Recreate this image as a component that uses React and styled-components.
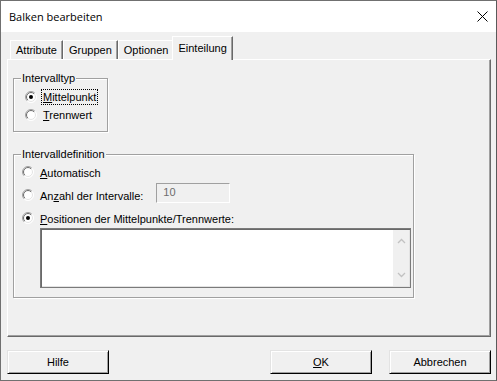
import React from 'react';
import styled, { createGlobalStyle } from 'styled-components';

const Global = createGlobalStyle`
  html, body { margin: 0; padding: 0; background: #f0f0f0; }
  body {
    font-family: "Liberation Sans", Arial, sans-serif;
    font-size: 11px;
    color: #000;
  }
  * { box-sizing: border-box; }
`;

const Window = styled.div`
  width: 497px;
  height: 381px;
  border: 1px solid #707070;
  border-right-color: #5a5a5a;
  display: flex;
  flex-direction: column;
  background: #f0f0f0;
  overflow: hidden;
`;

const TitleBar = styled.div`
  height: 31px;
  flex: none;
  background: #fff;
  display: flex;
  align-items: center;
  justify-content: space-between;
  padding-left: 8px;
`;

const Title = styled.span`
  font-family: "Open Sans", "Liberation Sans", sans-serif;
  font-size: 11px;
  color: #000;
`;

const CloseButton = styled.div`
  width: 28px;
  height: 31px;
  display: flex;
  align-items: center;
  justify-content: center;
`;

const Body = styled.div`
  flex: 1;
  display: flex;
  flex-direction: column;
  padding: 4px 5px 0 6px;
`;

const TabStrip = styled.div`
  display: flex;
  align-items: flex-end;
  height: 23px;
  padding-left: 3px;
  position: relative;
  z-index: 2;
`;

const Tab = styled.div`
  height: ${p => (p.$active ? 24 : 19)}px;
  margin: 0 ${p => (p.$active ? -2 : 0)}px ${p => (p.$active ? -1 : 0)}px;
  padding: 0 5px;
  border: 1px solid;
  border-bottom: none;
  border-color: #fff #696969 transparent #fff;
  box-shadow: inset -1px 0 #a0a0a0;
  background: #f0f0f0;
  position: relative;
  z-index: ${p => (p.$active ? 2 : 1)};
  display: flex;
  align-items: center;
  white-space: nowrap;
  line-height: 13px;
`;

const Panel = styled.div`
  height: 278px;
  border: 1px solid;
  border-color: #fff #696969 #696969 #fff;
  box-shadow: inset -1px -1px #a0a0a0;
  padding: 11px 0 0 5px;
  display: flex;
  flex-direction: column;
  align-items: flex-start;
  gap: 15px;
`;

const Group = styled.fieldset`
  margin: 0;
  padding: 0;
  width: ${p => p.$width}px;
  border: 1px solid #a0a0a0;
  box-shadow: inset 1px 1px #fff, 1px 1px #fff;
  min-inline-size: 0;
`;

const Legend = styled.legend`
  padding: 0 1px;
  margin-left: 7px;
  line-height: 14px;
  background: #f0f0f0;
`;

const GroupBody = styled.div`
  display: flex;
  flex-direction: column;
  padding: ${p => p.$pad};
`;

const Row = styled.div`
  display: flex;
  align-items: center;
  height: ${p => p.$h}px;
  margin-top: ${p => p.$mt || 0}px;
`;

const RadioBox = styled.span`
  width: 12px;
  height: 12px;
  flex: none;
  display: block;
  margin-top: ${p => p.$mt || 0}px;
`;

const Label = styled.span`
  margin-left: 4px;
  padding: 0 1px;
  border: 1px dotted ${p => (p.$focus ? '#000' : 'transparent')};
  line-height: 14px;
  white-space: nowrap;
`;

const DisabledInput = styled.div`
  width: 74px;
  height: 20px;
  margin-left: 11px;
  margin-bottom: 6px;
  border: 1px solid;
  border-color: #a0a0a0 #fff #fff #a0a0a0;
  background: #f0f0f0;
  color: #6d6d6d;
  padding: 2px 0 0 6px;
  line-height: 13px;
`;

const ListBox = styled.div`
  width: 371px;
  height: 60px;
  margin-left: 18px;
  border: 1px solid #7a7a7a;
  box-shadow: inset 1px 1px #696969, inset -1px -1px #e3e3e3;
  background: #fff;
  display: flex;
  padding: 1px;
`;

const ListContent = styled.div`
  flex: 1;
`;

const ScrollBar = styled.div`
  width: 16px;
  background: #f0f0f0;
  display: flex;
  flex-direction: column;
  justify-content: space-between;
`;

const ScrollButton = styled.div`
  height: 22px;
  display: flex;
  align-items: center;
  justify-content: center;
`;

const ButtonRow = styled.div`
  display: flex;
  justify-content: space-between;
  margin-top: 13px;
`;

const ButtonGroup = styled.div`
  display: flex;
  gap: 17px;
`;

const Button = styled.div`
  width: 102px;
  height: 24px;
  border: 1px solid;
  border-color: #e3e3e3 #000 #000 #e3e3e3;
  box-shadow: inset 1px 1px #fff, inset -1px -1px #a0a0a0;
  background: #f0f0f0;
  display: flex;
  align-items: center;
  justify-content: center;
  line-height: 13px;
`;

const Radio = ({ checked, mt }) => (
  <RadioBox $mt={mt}>
    <svg width="12" height="12" viewBox="0 0 12 12">
      <defs>
        <linearGradient id="ro" x1="0" y1="0" x2="1" y2="1">
          <stop offset="0.45" stopColor="#a0a0a0" />
          <stop offset="0.55" stopColor="#ffffff" />
        </linearGradient>
        <linearGradient id="ri" x1="0" y1="0" x2="1" y2="1">
          <stop offset="0.45" stopColor="#696969" />
          <stop offset="0.55" stopColor="#e3e3e3" />
        </linearGradient>
      </defs>
      <circle cx="6" cy="6" r="5.5" fill="#fff" stroke="url(#ro)" strokeWidth="1" />
      <circle cx="6" cy="6" r="4.5" fill="#fff" stroke="url(#ri)" strokeWidth="1" />
      {checked && <circle cx="6" cy="6" r="2" fill="#000" />}
    </svg>
  </RadioBox>
);

const Chevron = ({ up }) => (
  <svg width="9" height="6" viewBox="0 0 9 6">
    <path
      d={up ? 'M1 5 L4.5 1.5 L8 5' : 'M1 1 L4.5 4.5 L8 1'}
      fill="none"
      stroke="#c2c2c2"
      strokeWidth="1.3"
    />
  </svg>
);

export default function App() {
  return (
    <>
      <Global />
      <Window>
        <TitleBar>
          <Title>Balken bearbeiten</Title>
          <CloseButton>
            <svg width="11" height="11" viewBox="0 0 11 11">
              <path d="M0.5 0.5 L10.5 10.5 M10.5 0.5 L0.5 10.5" stroke="#000" strokeWidth="1" />
            </svg>
          </CloseButton>
        </TitleBar>
        <Body>
          <TabStrip>
            <Tab>Attribute</Tab>
            <Tab>Gruppen</Tab>
            <Tab>Optionen</Tab>
            <Tab $active>Einteilung</Tab>
          </TabStrip>
          <Panel>
            <Group $width={95}>
              <Legend>Intervalltyp</Legend>
              <GroupBody $pad="3px 0 7px 11px">
                <Row $h={18}>
                  <Radio checked />
                  <Label $focus>
                    <u>M</u>ittelpunkt
                  </Label>
                </Row>
                <Row $h={18}>
                  <Radio />
                  <Label>
                    <u>T</u>rennwert
                  </Label>
                </Row>
              </GroupBody>
            </Group>
            <Group $width={401}>
              <Legend>Intervalldefinition</Legend>
              <GroupBody $pad="0 0 9px 8px">
                <Row $h={23}>
                  <Radio mt={-1} />
                  <Label>
                    <u>A</u>utomatisch
                  </Label>
                </Row>
                <Row $h={23}>
                  <Radio mt={-1} />
                  <Label>
                    An<u>z</u>ahl der Intervalle:
                  </Label>
                  <DisabledInput>10</DisabledInput>
                </Row>
                <Row $h={18} $mt={3}>
                  <Radio checked mt={-3} />
                  <Label>
                    <u>P</u>ositionen der Mittelpunkte/Trennwerte:
                  </Label>
                </Row>
                <ListBox>
                  <ListContent />
                  <ScrollBar>
                    <ScrollButton>
                      <Chevron up />
                    </ScrollButton>
                    <ScrollButton>
                      <Chevron />
                    </ScrollButton>
                  </ScrollBar>
                </ListBox>
              </GroupBody>
            </Group>
          </Panel>
          <ButtonRow>
            <Button>Hilfe</Button>
            <ButtonGroup>
              <Button>
                <u>O</u>K
              </Button>
              <Button>Abbrechen</Button>
            </ButtonGroup>
          </ButtonRow>
        </Body>
      </Window>
    </>
  );
}
